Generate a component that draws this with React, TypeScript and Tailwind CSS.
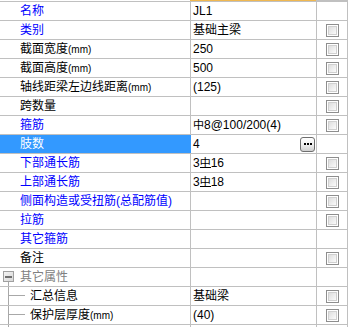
import React from "react";

type Row = {
  label: React.ReactNode;
  color?: string;
  value?: React.ReactNode;
  check?: boolean;
  selected?: boolean;
  button?: boolean;
  tree?: "group" | "child";
};

const Rebar = ({ bar }: { bar?: boolean }) => (
  <span className="relative inline-block text-[11px]">
    中
    {bar && <span className="absolute left-0 right-0 bottom-[4px] h-px bg-black" />}
  </span>
);

const MM = () => (
  <span
    className="text-[10px]"
    style={{ fontFamily: '"Liberation Sans", sans-serif' }}
  >
    (mm)
  </span>
);

const rows: Row[] = [
  { label: "名称", color: "text-[#0000ff]", value: "JL1" },
  { label: "类别", color: "text-[#0000ff]", value: "基础主梁", check: true },
  { label: <>截面宽度<MM /></>, color: "text-black", value: "250", check: true },
  { label: <>截面高度<MM /></>, color: "text-black", value: "500", check: true },
  { label: <>轴线距梁左边线距离<MM /></>, color: "text-black", value: "(125)", check: true },
  { label: "跨数量", color: "text-black", value: "", check: true },
  { label: "箍筋", color: "text-[#0000ff]", value: <><Rebar />8@100/200(4)</>, check: true },
  { label: "肢数", color: "text-white", value: "4", selected: true, button: true },
  { label: "下部通长筋", color: "text-[#0000ff]", value: <>3<Rebar bar />16</>, check: true },
  { label: "上部通长筋", color: "text-[#0000ff]", value: <>3<Rebar bar />18</>, check: true },
  { label: "侧面构造或受扭筋(总配筋值)", color: "text-[#0000ff]", value: "", check: true },
  { label: "拉筋", color: "text-[#0000ff]", value: "", check: true },
  { label: "其它箍筋", color: "text-[#0000ff]", value: "" },
  { label: "备注", color: "text-black", value: "", check: true },
  { label: "其它属性", color: "text-[#808080]", value: "", tree: "group" },
  { label: "汇总信息", color: "text-black", value: "基础梁", check: true, tree: "child" },
  { label: <>保护层厚度<MM /></>, color: "text-black", value: "(40)", check: true, tree: "child" },
  { label: "", color: "text-black", value: "", check: true, tree: "child" },
];

const Checkbox = () => (
  <div className="w-[13px] h-[13px] border border-[#8e8e8e] p-px bg-white">
    <div className="w-full h-full border border-[#d0d0d0] bg-gradient-to-br from-[#dedede] to-[#fbfbfb]" />
  </div>
);

const DotsButton = () => (
  <div className="w-[15px] h-[15px] rounded-[3px] border border-[#6e6e6e] bg-gradient-to-b from-white via-[#f0f0f0] to-[#cfcfcf] flex items-center justify-center gap-[1px]">
    <span className="w-[2px] h-[2px] bg-black" />
    <span className="w-[2px] h-[2px] bg-black" />
    <span className="w-[2px] h-[2px] bg-black" />
  </div>
);

export default function App() {
  return (
    <div
      className="w-[355px] h-[327px] overflow-hidden bg-white text-[12px] leading-[18px]"
      style={{ fontFamily: '"Liberation Sans", "Noto Sans CJK SC", sans-serif' }}
    >
      <div className="w-[348px]">
        <div className="flex h-px">
          <div className="w-[190px] bg-white" />
          <div className="w-[126px] bg-[#f0b850]" />
          <div className="w-[32px] bg-[#c0c0c0]" />
        </div>
        <div className="border-t border-[#c0c0c0]">
          {rows.map((r, i) => (
            <div key={i} className="flex h-[19px] border-b border-[#c0c0c0]">
              <div
                className={`relative w-[190px] h-[18px] whitespace-nowrap overflow-hidden ${
                  r.selected ? "bg-[#3399ff]" : ""
                } ${r.color} ${r.tree === "child" ? "pl-[30px]" : "pl-[20px]"}`}
              >
                {r.tree === "group" && (
                  <>
                    <span className="absolute left-[3px] top-[3px] w-[11px] h-[11px] border border-[#a0a0a0] bg-gradient-to-br from-[#f4f4f4] to-[#d8d8d8] flex items-center justify-center">
                      <span className="w-[7px] h-[2px] bg-[#707070]" />
                    </span>
                    <span className="absolute left-[8px] top-[14px] w-px h-[5px] bg-[#a8a8a8]" />
                  </>
                )}
                {r.tree === "child" && (
                  <>
                    <span className="absolute left-[8px] top-[-1px] w-px h-[20px] bg-[#a8a8a8]" />
                    <span className="absolute left-[9px] top-[8px] w-[16px] h-px bg-[#a8a8a8]" />
                  </>
                )}
                {r.label}
              </div>
              <div
                className={`w-[126px] h-[18px] border-l ${
                  r.selected ? "border-[#3399ff]" : "border-[#c0c0c0]"
                } pl-[2px] pr-px flex items-center justify-between text-black whitespace-nowrap`}
              >
                <span>{r.value}</span>
                {r.button && <DotsButton />}
              </div>
              <div className="w-[32px] h-[18px] border-l border-r border-[#c0c0c0] flex items-center justify-center">
                {r.check && <Checkbox />}
              </div>
            </div>
          ))}
        </div>
      </div>
    </div>
  );
}
